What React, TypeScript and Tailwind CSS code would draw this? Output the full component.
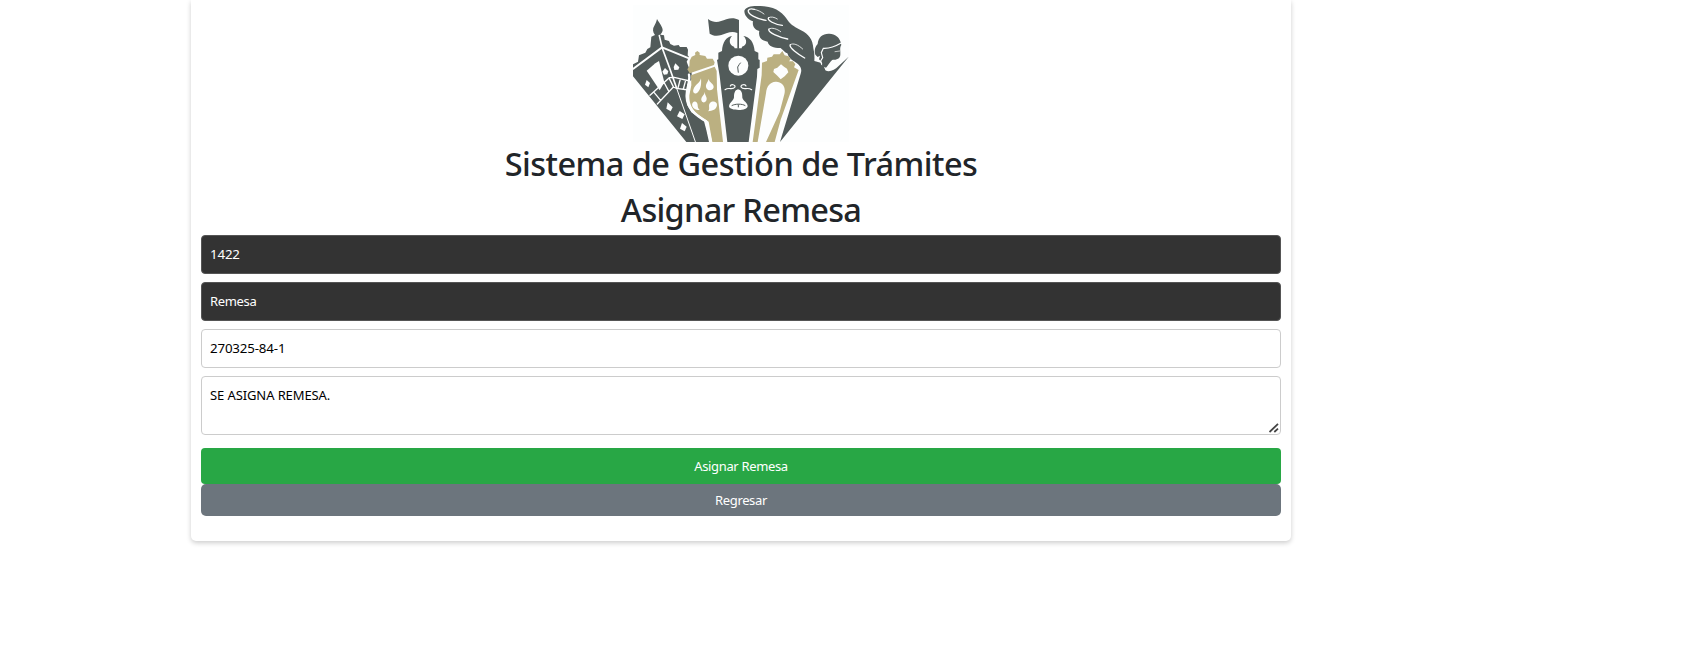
function Logo() {
  return (
    <svg viewBox="39 15 648 411" className="mx-auto block h-[137px] w-[216px] bg-[#fdfefe]" role="img" aria-label="Logo">
      <g fill="#525b5a">
        {/* Left tower */}
        <path d="M111 57C119 71 129 82 128 91C127 98 123 101 121 104L132 106L134 119L147 123L151 132L162 137L176 135L180 141L200 141L204 149L203 166L207 171L200 185L207 204L214 208L216 237L202 253L198 285L202 315L214 337L252 364L259 390L267 426H199L39 229V193L54 185L57 166L76 158L82 147L91 142L94 110L105 105C98 96 97 86 103 77C108 69 109 64 111 57Z" />
        {/* Flag */}
        <path d="M264 57C285 72 299 65 319 58C333 53 345 54 357 60V146H352V99C335 92 321 99 304 105C290 109 278 107 269 101Z" />
        {/* Clock tower */}
        <path d="M336 108C319 110 307 128 306 153L295 158V178L291 180L299 228L322 426H386L411 230L412 207L419 203V180L415 178V158L404 153C402 127 390 111 370 108C382 118 382 137 366 140L365 145H344L342 140C328 136 325 119 336 108Z" />
        {/* Wing and shoulder */}
        <path d="M373 32C379 18 402 16 432 19C472 22 492 43 503 61C513 76 528 83 543 91C567 103 578 119 580 145C583 157 584 169 583 183L602 188L604 195L611 197L616 211C627 218 644 211 655 199L686 170L480 426L542 221C548 204 538 194 522 184C512 178 506 172 502 160C491 155 486 146 481 144C461 144 445 138 443 125C424 123 414 110 418 93C405 90 396 79 399 64C382 57 373 45 373 32Z" />
        {/* Head */}
        <path d="M586 164C582 151 586 139 593 132C595 110 609 100 628 101C646 102 657 112 661 124L664 135C658 144 662 153 661 161C662 173 654 180 639 179C632 181 629 190 618 203L607 198L603 184L597 178L600 167L593 171Z" />
      </g>
      <g fill="#bbb081">
        {/* Round tower */}
        <path d="M226 165L225 158L232 153L239 158V165L256 168L261 176L278 176L284 187L282 195L209 220L202 208L208 199L209 182L215 170Z" />
        <path d="M213 226L284 200L290 213L291 268L309 426H277L266 365L233 343C216 329 207 310 208 286L214 256Z" />
        {/* Arched tower */}
        <path fillRule="evenodd" d="M426 188L441 183L442 173L456 170L461 163L479 163L487 153L494 166L506 169L512 178L507 184L519 184L526 193L522 202L536 210L482 359L464 426H438L479 336L493 283C499 259 485 244 467 245C450 246 440 258 438 280L413 426H398L425 225ZM483 193L472 203L462 207L460 216L472 227L482 238L494 229L505 217L501 206L492 200Z" />
      </g>
      <g fill="#fdfefe">
        {/* Windows of the left tower */}
        <path d="M80 212L106 190L117 183L133 247L119 271Z" />
        <path d="M135 204L145 214L142 223L132 224L127 215Z" />
        <path d="M166 190L178 202L175 209L163 210L161 201Z" />
        <path d="M80 240L90 249L85 262L75 254Z" />
        <path d="M143 307L158 322L152 334L139 326Z" />
        <path d="M179 333L194 343L187 357L171 349Z" />
        <path d="M186 369L200 380L194 394L180 386Z" />
        {/* Drops */}
        <path d="M243 235C245 257 241 272 230 280C221 282 217 274 221 266C226 254 239 250 243 235Z" />
        <path d="M266 237C262 250 255 254 259 264C264 275 279 272 281 262C282 250 268 249 266 237Z" />
        <path d="M255 275C252 287 240 292 245 303C250 312 261 306 260 295C259 286 254 286 255 275Z" />
        <path d="M239 330C222 330 212 318 218 308C224 300 233 306 233 315C233 323 235 326 239 330Z" />
        <path d="M264 334C272 327 263 317 270 309C277 301 292 304 291 315C290 329 277 332 264 334Z" />
        {/* Clock and bell */}
        <circle cx="355" cy="197" r="30" />
        <path d="M354 268C344 270 342 281 342 292C341 302 329 307 327 319C328 327 342 330 356 330C370 330 383 326 383 318C382 307 370 303 367 293C367 281 366 270 354 268Z" />
      </g>
      <g fill="none" stroke="#fdfefe" strokeLinecap="round">
        <path strokeWidth="5" d="M118 107L127 145L148 202L170 265" />
        <path strokeWidth="3" d="M170 265L226 425" />
        <path strokeWidth="6" d="M40 206L126 142L207 175" />
        <path strokeWidth="4" d="M90 286L148 233L163 232L209 243M112 312L160 261L170 265L205 270M148 236L161 262M181 237L174 264M197 241L190 267M133 249L147 275M102 277L122 301" />
        <path strokeWidth="7" d="M207 224C212 249 198 263 200 291C201 323 224 344 258 364L273 426" />
        <path strokeWidth="3.5" d="M315 269C327 260 337 272 345 261C346 254 333 251 331 258M395 269C382 260 371 272 363 261C362 253 376 252 378 258" />
        {/* Feathers */}
        <path strokeWidth="4" d="M438 61C412 57 382 43 385 31C387 27 395 26 403 28M487 76C466 74 439 61 446 53M503 117C478 112 441 97 447 87M554 174C535 163 505 142 511 134" />
        <path strokeWidth="2.5" d="M403 28C413 30 423 35 432 42M446 53C452 49 463 51 472 57M447 87C455 81 472 87 482 95M511 134C519 128 535 134 548 147" />
        {/* Hair band */}
        <path strokeWidth="3.5" d="M605 192L602 183L608 173L604 158L610 145C628 146 645 140 662 130" />
        <path strokeWidth="2" d="M645 155L659 153" />
      </g>
      <path d="M355 218L353 201L358 193L362 188M335 317C346 311 366 311 376 317M355 313V322" fill="none" stroke="#525b5a" strokeWidth="3" />
    </svg>
  );
}

const field = "block w-full rounded-[4px] border px-[8px] outline-none";
const digits = "text-[13.3px] tracking-[-0.15px]";
const words = "text-[13px] tracking-[-0.35px]";
const heading = "flex h-[46px] items-center justify-center text-[32.5px] font-medium text-[#212529]";

export default function App() {
  return (
    <main className="h-[645px] overflow-hidden bg-white pl-[191px] font-['Noto_Sans','Open_Sans',sans-serif]">
      <section className="h-[541px] w-[1100px] rounded-b-[5px] bg-white px-[10px] pt-[5px] shadow-[0_2px_5px_rgba(0,0,0,0.2)]">
        <Logo />
        <h1 className={`${heading} mt-[-1px] tracking-[-0.53px]`}>Sistema de Gestión de Trámites</h1>
        <h2 className={`${heading} tracking-[-0.7px]`}>Asignar Remesa</h2>
        <form className="mt-[2px]" onSubmit={(e) => e.preventDefault()}>
          <div className="flex flex-col gap-2">
            <input className={`${field} ${digits} h-[39px] border-[#555] bg-[#333] pb-[2px] text-white`} defaultValue="1422" readOnly />
            <input className={`${field} ${words} h-[39px] border-[#555] bg-[#333] pb-[2px] text-white`} defaultValue="Remesa" readOnly />
            <input className={`${field} ${digits} h-[39px] border-[#ccc] bg-white pb-[2px] text-black`} defaultValue="270325-84-1" />
            <div className="relative">
              <textarea className={`${field} h-[59px] resize-none border-[#ccc] bg-white pt-[8px] text-[13px] leading-[20px] tracking-[-0.1px] text-black`} defaultValue="SE ASIGNA REMESA." />
              <svg className="pointer-events-none absolute right-[2px] bottom-[2px] h-[10px] w-[10px]" viewBox="0 0 10 10" fill="none" stroke="#444" strokeWidth="1.8">
                <path d="M0.5 9L9 0.8M5.3 9L9 5.7" />
              </svg>
            </div>
          </div>
          <button className={`${words} mt-[13px] block h-[36px] w-full rounded-[4px] bg-[#28a745] pt-[2px] text-white`}>Asignar Remesa</button>
          <button type="button" className={`${words} block h-[32px] w-full rounded-[5px] bg-[#6c757d] pt-[2px] text-white`}>Regresar</button>
        </form>
      </section>
    </main>
  );
}
